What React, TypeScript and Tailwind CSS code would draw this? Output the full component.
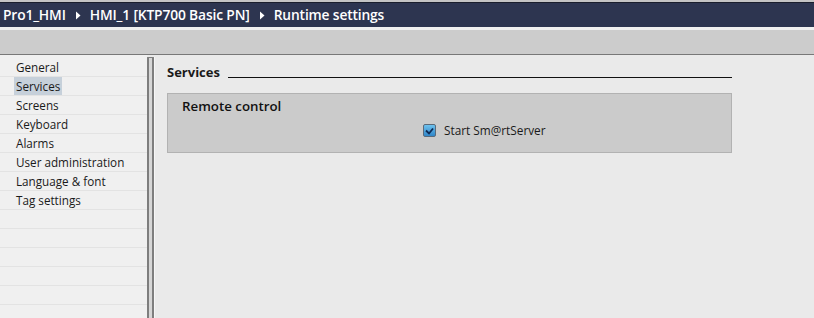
import React from "react";

const items = ["General", "Services", "Screens", "Keyboard", "Alarms", "User administration", "Language & font", "Tag settings", "", "", "", "", "", ""];

function Arrow() {
  return (
    <svg width="6" height="9" viewBox="0 0 6 9" className="mx-[9px]">
      <path d="M1 0.5 L5.5 4.5 L1 8.5 Z" fill="#ffffff" />
    </svg>
  );
}

export default function App() {
  const font = { fontFamily: '"Open Sans", "Noto Sans", sans-serif' };
  return (
    <div className="w-[814px] h-[318px] overflow-hidden bg-[#eaeaea] flex flex-col" style={font}>
      <div className="h-[2px] bg-[#c4c4c4]" />
      <div className="h-[25px] bg-[#2d3550] border-t border-[#1a1e2c] flex items-center pl-[3px] text-white text-[13.8px] font-semibold tracking-[-0.15px]">
        <span>Pro1_HMI</span>
        <Arrow />
        <span>HMI_1 [KTP700 Basic PN]</span>
        <Arrow />
        <span>Runtime settings</span>
      </div>
      <div className="h-[3px] bg-[#f0f0f0]" />
      <div className="h-[25px] bg-[#cccccc] border-b border-[#787878]" />
      <div className="flex flex-1 min-h-0">
        <div className="w-[147px] bg-[#f0f0f0] pt-[3px] flex flex-col">
          {items.map((t, i) => (
            <div key={i} className="h-[19px] border-b border-[#e3e3e3] flex items-center pl-[14px] text-[11.7px] text-[#1a1a1a] shrink-0">
              {t && (
                <span className={"px-[2px] leading-[18px] " + (t === "Services" ? "bg-[#c6d0da]" : "")}>{t}</span>
              )}
            </div>
          ))}
        </div>
        <div className="w-[8px] flex pt-[2px]">
          <div className="w-[7px] bg-[#d6d6d6] border-x-2 border-[#7e7e7e] rounded-t-[1px] border-t" />
          <div className="w-[1px] bg-[#f6f6f6]" />
        </div>
        <div className="flex-1 pl-[12px] pt-[8px]">
          <div className="flex items-end w-[565px]">
            <span className="text-[13px] font-bold text-[#1a1a1a] leading-[18px]">Services</span>
            <div className="flex-1 border-b border-[#111] ml-[8px] mb-[3px]" />
          </div>
          <div className="mt-[12px] w-[565px] h-[60px] bg-[#cbcbcb] border border-[#b2b2b2] relative">
            <div className="pl-[14px] pt-[2px] text-[13.3px] font-semibold text-[#111] leading-[20px]">Remote control</div>
            <div className="flex items-center pl-[255px] mt-[6px]">
              <div className="w-[13px] h-[13px] rounded-[2px] border border-[#5a6a7a] bg-gradient-to-b from-[#6ec2ee] to-[#2f86c8] flex items-center justify-center">
                <svg width="9" height="8" viewBox="0 0 9 8">
                  <path d="M1 3.5 L4 6.5 L8 1.5" stroke="#0d2a55" strokeWidth="1.8" fill="none" />
                </svg>
              </div>
              <span className="ml-[8px] text-[11.8px] text-[#1a1a1a]">Start Sm@rtServer</span>
            </div>
          </div>
        </div>
      </div>
    </div>
  );
}
